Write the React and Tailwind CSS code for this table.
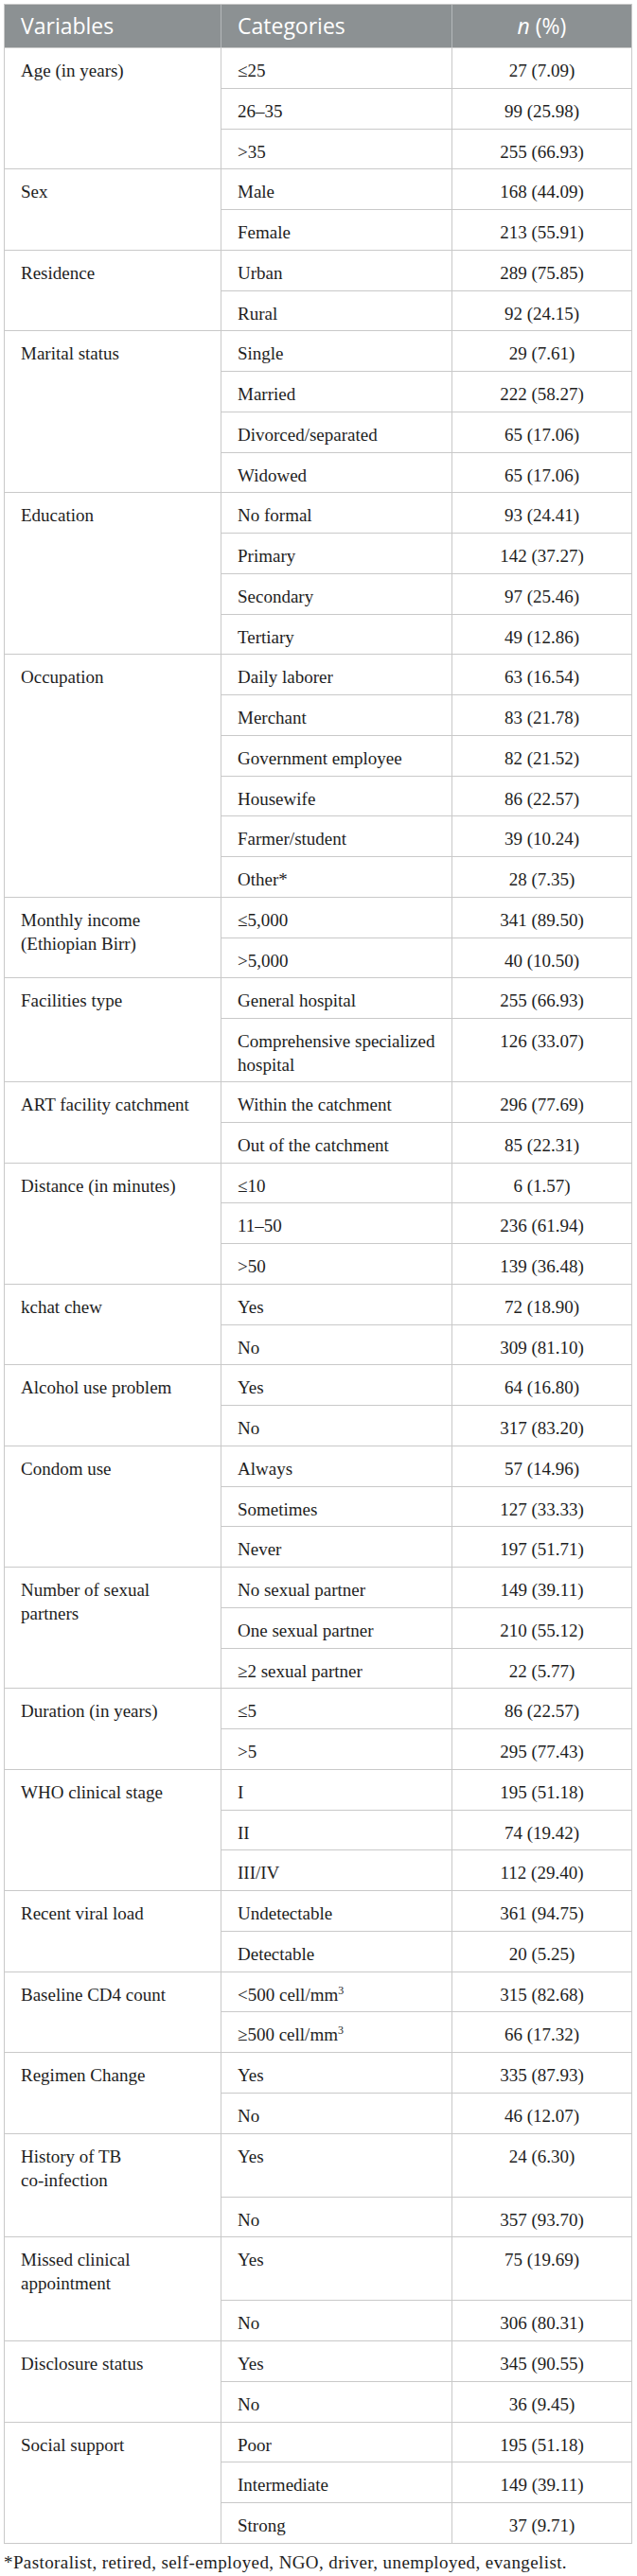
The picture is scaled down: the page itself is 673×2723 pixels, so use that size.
import React from 'react';

const mm3 = (
  <>
    cell/mm<sup className="text-[12px] relative -top-[7px]">3</sup>
  </>
);

const groups = [
  { label: 'Age (in years)', rows: [['≤25', '27 (7.09)'], ['26–35', '99 (25.98)'], ['>35', '255 (66.93)']] },
  { label: 'Sex', rows: [['Male', '168 (44.09)'], ['Female', '213 (55.91)']] },
  { label: 'Residence', rows: [['Urban', '289 (75.85)'], ['Rural', '92 (24.15)']] },
  {
    label: 'Marital status',
    rows: [['Single', '29 (7.61)'], ['Married', '222 (58.27)'], ['Divorced/separated', '65 (17.06)'], ['Widowed', '65 (17.06)']]
  },
  {
    label: 'Education',
    rows: [['No formal', '93 (24.41)'], ['Primary', '142 (37.27)'], ['Secondary', '97 (25.46)'], ['Tertiary', '49 (12.86)']]
  },
  {
    label: 'Occupation',
    rows: [
      ['Daily laborer', '63 (16.54)'],
      ['Merchant', '83 (21.78)'],
      ['Government employee', '82 (21.52)'],
      ['Housewife', '86 (22.57)'],
      ['Farmer/student', '39 (10.24)'],
      ['Other*', '28 (7.35)']
    ]
  },
  { label: 'Monthly income (Ethiopian Birr)', rows: [['≤5,000', '341 (89.50)'], ['>5,000', '40 (10.50)']] },
  {
    label: 'Facilities type',
    rows: [['General hospital', '255 (66.93)'], ['Comprehensive specialized hospital', '126 (33.07)']]
  },
  {
    label: 'ART facility catchment',
    rows: [['Within the catchment', '296 (77.69)'], ['Out of the catchment', '85 (22.31)']]
  },
  { label: 'Distance (in minutes)', rows: [['≤10', '6 (1.57)'], ['11–50', '236 (61.94)'], ['>50', '139 (36.48)']] },
  { label: 'kchat chew', rows: [['Yes', '72 (18.90)'], ['No', '309 (81.10)']] },
  { label: 'Alcohol use problem', rows: [['Yes', '64 (16.80)'], ['No', '317 (83.20)']] },
  { label: 'Condom use', rows: [['Always', '57 (14.96)'], ['Sometimes', '127 (33.33)'], ['Never', '197 (51.71)']] },
  {
    label: 'Number of sexual partners',
    rows: [['No sexual partner', '149 (39.11)'], ['One sexual partner', '210 (55.12)'], ['≥2 sexual partner', '22 (5.77)']]
  },
  { label: 'Duration (in years)', rows: [['≤5', '86 (22.57)'], ['>5', '295 (77.43)']] },
  { label: 'WHO clinical stage', rows: [['I', '195 (51.18)'], ['II', '74 (19.42)'], ['III/IV', '112 (29.40)']] },
  { label: 'Recent viral load', rows: [['Undetectable', '361 (94.75)'], ['Detectable', '20 (5.25)']] },
  {
    label: 'Baseline CD4 count',
    rows: [[<>{'<500 '}{mm3}</>, '315 (82.68)'], [<>{'≥500 '}{mm3}</>, '66 (17.32)']]
  },
  { label: 'Regimen Change', rows: [['Yes', '335 (87.93)'], ['No', '46 (12.07)']] },
  {
    label: <>History of TB <span className="whitespace-nowrap">co-infection</span></>,
    tall: true,
    rows: [['Yes', '24 (6.30)'], ['No', '357 (93.70)']]
  },
  { label: 'Missed clinical appointment', tall: true, rows: [['Yes', '75 (19.69)'], ['No', '306 (80.31)']] },
  { label: 'Disclosure status', rows: [['Yes', '345 (90.55)'], ['No', '36 (9.45)']] },
  { label: 'Social support', rows: [['Poor', '195 (51.18)'], ['Intermediate', '149 (39.11)'], ['Strong', '37 (9.71)']] }
];

const serif = { fontFamily: '"Liberation Serif", "Times New Roman", serif' };

const Group = ({ group }) => (
  <div className="flex">
    <div className="w-[229px] shrink-0 border-t border-r border-[#c9c9c9] pl-[17px] pr-[12px] pt-[11px] pb-[5px]">
      {group.label}
    </div>
    <div className="flex-1 flex flex-col">
      {group.rows.map((row, i) => (
        <div
          key={i}
          className={`flex border-t border-[#c9c9c9] ${group.tall && i === 0 ? 'min-h-[67px]' : 'min-h-[42.75px]'}`}
        >
          <div className="w-[244px] shrink-0 border-r border-[#c9c9c9] pl-[17px] pr-[8px] pt-[11px] pb-[5px]">
            {row[0]}
          </div>
          <div className="flex-1 text-center pt-[11px] pb-[5px]">{row[1]}</div>
        </div>
      ))}
    </div>
  </div>
);

export default function App() {
  return (
    <div className="bg-white w-[673px] pt-[4px] pl-[4px]" style={serif}>
      <div className="w-[664px] border border-[#c9c9c9] text-[19px] leading-[25px] text-[#1e1e1e]">
        <div
          className="flex h-[45px] bg-[#8c9193] text-white text-[23px]"
          style={{ fontFamily: '"Open Sans", "Noto Sans", sans-serif' }}
        >
          <div className="w-[229px] shrink-0 border-r border-[#b4b8ba] pl-[17px] flex items-center">Variables</div>
          <div className="w-[244px] shrink-0 border-r border-[#b4b8ba] pl-[17px] flex items-center">Categories</div>
          <div className="flex-1 flex items-center justify-center">
            <span className="italic">n</span>
            <span className="ml-[6px]">(%)</span>
          </div>
        </div>
        {groups.map((g, i) => (
          <Group key={i} group={g} />
        ))}
      </div>
      <p className="text-[19px] leading-[25px] text-[#1e1e1e] mt-[7px] tracking-[0.4px]">
        *Pastoralist, retired, self-employed, NGO, driver, unemployed, evangelist.
      </p>
    </div>
  );
}
